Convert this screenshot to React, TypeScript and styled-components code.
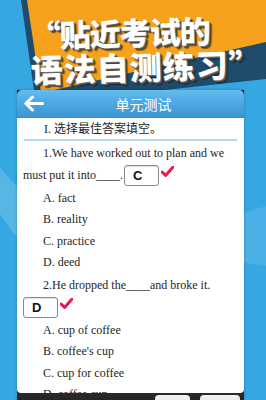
import styled, { createGlobalStyle } from 'styled-components'

const GlobalStyle = createGlobalStyle`
  html, body {
    margin: 0;
    padding: 0;
  }
  body {
    width: 266px;
    height: 400px;
    overflow: hidden;
    background: #36a8e1;
  }
`

const Page = styled.div`
  position: relative;
  width: 266px;
  height: 400px;
  overflow: hidden;
  background: #36a8e1;
  font-family: 'Liberation Serif', 'Noto Sans CJK SC', serif;
`

const Backdrop = styled.svg`
  position: absolute;
  left: 0;
  top: 0;
  z-index: 0;
`

const Content = styled.div`
  position: relative;
  z-index: 1;
  display: flex;
  flex-direction: column;
`

const Headline = styled.div`
  height: 90px;
  display: flex;
  flex-direction: column;
  padding-top: 14px;
  box-sizing: border-box;
  transform: rotate(-1.5deg);
  transform-origin: 50% 50%;
`

const HeadLine = styled.div<{ $indent: number; $size: number; $spacing: number }>`
  padding-left: ${(p) => p.$indent}px;
  height: 35px;
  line-height: 35px;
  font-family: 'Noto Sans CJK SC', sans-serif;
  font-weight: 900;
  font-size: ${(p) => p.$size}px;
  letter-spacing: ${(p) => p.$spacing}px;
  color: #ffffff;
  white-space: nowrap;
  text-shadow: 1px 1px 0 #6d6d6d, 2px 2px 0 #444, 3px 3px 1px rgba(0, 0, 0, 0.45);
`

const Card = styled.div`
  margin-left: 17px;
  width: 227px;
  height: 343px;
  display: flex;
  flex-direction: column;
  background: #1b1b1b;
  box-shadow: 0 0 3px rgba(0, 0, 0, 0.25);
`

const Header = styled.div`
  height: 28px;
  display: flex;
  align-items: center;
  border-radius: 5px 5px 0 0;
  background: linear-gradient(#63bcee, #4aa5e0 55%, #3f96d4);
  border-bottom: 1px solid #3a8cc8;
  box-sizing: border-box;
`

const BackButton = styled.div`
  width: 27px;
  height: 28px;
  display: flex;
  align-items: center;
  justify-content: flex-end;
`

const Title = styled.div`
  flex: 1;
  text-align: center;
  font-family: 'Noto Sans CJK SC', sans-serif;
  font-size: 14px;
  color: #ffffff;
  padding-right: 1px;
`

const Body = styled.div`
  flex: 1;
  overflow: hidden;
  background: #ffffff;
  border-radius: 0 0 4px 4px;
  padding: 0 6px;
  color: #1e1e1e;
  font-size: 12px;
`

const SectionTitle = styled.div`
  height: 20px;
  line-height: 20px;
  padding-left: 20px;
  font-size: 12px;
  border-bottom: 2px solid #b5d6f2;
  margin: 0 1px;
  padding-top: 1px;
`

const QuestionLine = styled.div<{ $indent?: boolean }>`
  height: 22px;
  display: flex;
  align-items: center;
  white-space: nowrap;
  padding-left: ${(p) => (p.$indent ? 20 : 0)}px;
`

const QuestionBlock = styled.div`
  margin-top: 1px;
  display: flex;
  flex-direction: column;
`

const AnswerBox = styled.span<{ $gap: number }>`
  display: inline-flex;
  align-items: center;
  width: 35px;
  height: 21px;
  box-sizing: border-box;
  border: 1px solid #8a8a8a;
  border-radius: 3px;
  padding-left: 8px;
  font-family: 'Liberation Sans', Arial, sans-serif;
  font-weight: 700;
  font-size: 13px;
  color: #111;
  background: #fff;
  box-shadow: inset 0 1px 1px rgba(0, 0, 0, 0.12);
  margin-left: ${(p) => p.$gap}px;
`

const Check = styled.svg`
  margin-left: 2px;
  margin-top: -8px;
`

const Options = styled.div<{ $top: number }>`
  display: flex;
  flex-direction: column;
  padding-left: 20px;
  margin-top: ${(p) => p.$top}px;
`

const Option = styled.div`
  height: 21.3px;
  line-height: 21.3px;
  white-space: nowrap;
`

const Footer = styled.div`
  height: 40px;
  flex: none;
  display: flex;
  justify-content: flex-end;
  gap: 10px;
  padding: 2px 4px 0 0;
  box-sizing: border-box;
  background: linear-gradient(#2a2a2a, #111);
`

const FooterButton = styled.div<{ $w: number }>`
  width: ${(p) => p.$w}px;
  height: 24px;
  border-radius: 4px;
  background: linear-gradient(#f4f4f4, #cfcfcf);
`

function TickMark() {
  return (
    <Check width="13" height="11" viewBox="0 0 13 11">
      <path d="M1.2 6.2 L4.6 9.4 L11.8 1.2" fill="none" stroke="#e51b4e" strokeWidth="3" strokeLinecap="round" strokeLinejoin="round" />
    </Check>
  )
}

function BackArrow() {
  return (
    <svg width="21" height="17" viewBox="0 0 21 17">
      <path d="M19.5 8.5 H3 M9.5 2 L2.8 8.5 L9.5 15" fill="none" stroke="#ffffff" strokeWidth="3" strokeLinecap="round" strokeLinejoin="round" />
    </svg>
  )
}

export default function App() {
  return (
    <Page>
      <GlobalStyle />
      <Backdrop width="266" height="400" viewBox="0 0 266 400">
        <rect width="266" height="400" fill="#36a8e1" />
        <polygon points="0,168 20,190 20,242 0,214" fill="#64bdea" opacity="0.7" />
        <polygon points="240,214 266,206 266,266 240,262" fill="#52b5e8" opacity="0.7" />
        <polygon points="21,0 266,0 266,79 36,104" fill="#1f4b6c" />
        <polygon points="27,0 266,0 266,42 41,93" fill="#f7a21c" />
      </Backdrop>
      <Content>
        <Headline>
          <HeadLine $indent={30} $size={31} $spacing={-1}>
            “贴近考试的
          </HeadLine>
          <HeadLine $indent={30} $size={32} $spacing={1}>
            语法自测练习”
          </HeadLine>
        </Headline>
        <Card>
          <Header>
            <BackButton>
              <BackArrow />
            </BackButton>
            <Title>单元测试</Title>
          </Header>
          <Body>
            <SectionTitle>I. 选择最佳答案填空。</SectionTitle>
            <QuestionBlock>
              <QuestionLine $indent>1.We have worked out to plan and we</QuestionLine>
              <QuestionLine>
                <span>must put it into____.</span>
                <AnswerBox $gap={1}>C</AnswerBox>
                <TickMark />
              </QuestionLine>
            </QuestionBlock>
            <Options $top={2}>
              <Option>A. fact</Option>
              <Option>B. reality</Option>
              <Option>C. practice</Option>
              <Option>D. deed</Option>
            </Options>
            <QuestionBlock>
              <QuestionLine $indent>2.He dropped the____and broke it.</QuestionLine>
              <QuestionLine>
                <AnswerBox $gap={0}>D</AnswerBox>
                <TickMark />
              </QuestionLine>
            </QuestionBlock>
            <Options $top={2}>
              <Option>A. cup of coffee</Option>
              <Option>B. coffee's cup</Option>
              <Option>C. cup for coffee</Option>
              <Option>D. coffee cup</Option>
            </Options>
          </Body>
          <Footer>
            <FooterButton $w={35} />
            <FooterButton $w={40} />
          </Footer>
        </Card>
      </Content>
    </Page>
  )
}
